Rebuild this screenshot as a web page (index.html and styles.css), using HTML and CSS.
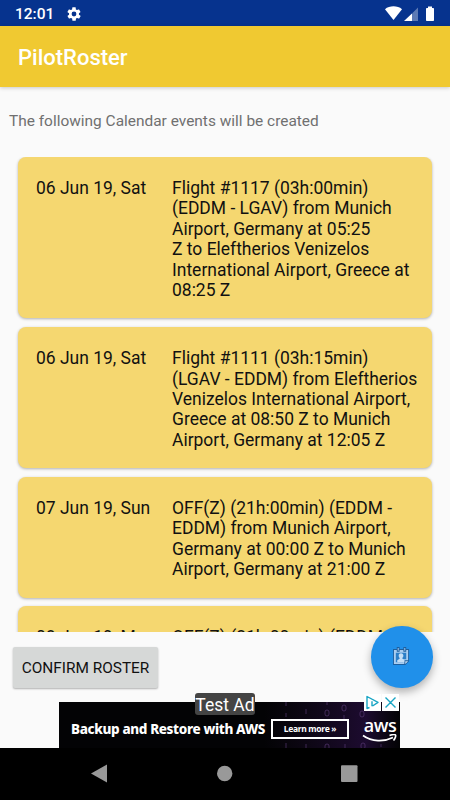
FILE: index.html
```
<!doctype html>
<html lang="en">
<head>
    <meta charset="utf-8">
    <meta name="viewport" content="width=device-width, initial-scale=1">
    <title>PilotRoster</title>
    <link rel="stylesheet" href="styles.css">
</head>
<body>
    <div class="status-bar">
        <span class="clock">12:01</span>
        <svg class="gear" viewBox="0 0 24 24"><path fill="#fff" fill-rule="evenodd" d="M19.4 13a7.5 7.5 0 0 0 0-2l2.1-1.6a.5.5 0 0 0 .1-.7l-2-3.4a.5.5 0 0 0-.6-.2l-2.5 1a7.3 7.3 0 0 0-1.7-1L14.5 2.4a.5.5 0 0 0-.5-.4h-4a.5.5 0 0 0-.5.4l-.4 2.7a7.7 7.7 0 0 0-1.7 1l-2.5-1a.5.5 0 0 0-.6.2l-2 3.4a.5.5 0 0 0 .1.7L4.6 11a7.9 7.9 0 0 0 0 2l-2.1 1.6a.5.5 0 0 0-.1.7l2 3.4c.1.2.4.3.6.2l2.5-1c.5.4 1.1.7 1.7 1l.4 2.7c0 .2.2.4.5.4h4c.2 0 .5-.2.5-.4l.4-2.7a7.3 7.3 0 0 0 1.7-1l2.5 1c.2.1.5 0 .6-.2l2-3.4a.5.5 0 0 0-.1-.7zM12 15.6a3.6 3.6 0 1 1 0-7.2 3.6 3.6 0 0 1 0 7.2z"/></svg>
        <svg class="system-icons" viewBox="0 0 50 16">
            <path fill="#fff" d="M0 3.2C4.5-.6 12.5-.6 17 3.2L8.5 14z"/>
            <path fill="#fff" d="M19 15 27 7.500V15z"/>
            <path fill="#fff" fill-opacity=".35" d="M27 7.5 33 1.5V15H27z"/>
            <path fill="#fff" d="M43 .5h4V2h1.200c.5 0 .8.3.8.8v11.400c0 .5-.3.8-.8.8h-6.400c-.5 0-.8-.3-.8-.8V2.800c0-.5.3-.8.8-.8H43z"/>
        </svg>
    </div>

    <header class="app-bar">PilotRoster</header>

    <p class="intro">The following Calendar events will be created</p>

    <ul class="events">
        <li>
            <div class="date">06 Jun 19, Sat</div>
            <div class="details">Flight #1117 (03h:00min)<br>(EDDM - LGAV) from Munich<br>Airport, Germany at 05:25<br>Z to Eleftherios Venizelos<br>International Airport, Greece at<br>08:25 Z</div>
        </li>
        <li>
            <div class="date">06 Jun 19, Sat</div>
            <div class="details">Flight #1111 (03h:15min)<br>(LGAV - EDDM) from Eleftherios<br>Venizelos International Airport,<br>Greece at 08:50 Z to Munich<br>Airport, Germany at 12:05 Z</div>
        </li>
        <li>
            <div class="date">07 Jun 19, Sun</div>
            <div class="details">OFF(Z) (21h:00min) (EDDM -<br>EDDM) from Munich Airport,<br>Germany at 00:00 Z to Munich<br>Airport, Germany at 21:00 Z</div>
        </li>
        <li>
            <div class="date">08 Jun 19, Mon</div>
            <div class="details">OFF(Z) (21h:00min) (EDDM -</div>
        </li>
    </ul>

    <div class="actions">
        <button type="button" class="confirm">CONFIRM ROSTER</button>
    </div>

    <button type="button" class="fab" aria-label="Open calendar">
        <svg viewBox="0 0 18 20">
            <path fill="#1d5f9f" d="M4 0h3v2h4V0h3v2h3v13l-4 4H0V2h4z"/>
            <path fill="#a9cdf0" d="M5 1h1v3H5zM12 1h1v3h-1zM1 3h3v2h3V3h4v2h3V3h2v11h-4v4H1z"/>
            <path fill="#2c7fc8" d="M3 6h11v7h-3v3H3z"/>
            <path fill="#c5def5" d="M8.5 6.5c1.7 0 2.5 1.1 2.5 2.6 0 1-.4 1.8-1 2.3v1l2 1V16H4.5v-2l2.5-1.5v-1c-.6-.5-1-1.3-1-2.4 0-1.5.8-2.6 2.5-2.6zM13 15h3l-3 3z"/>
        </svg>
    </button>

    <div class="ad">
        <svg class="ad-pattern" viewBox="0 0 341 46">
            <defs>
                <linearGradient id="glow">
                    <stop offset="0" stop-color="#180b24" stop-opacity="0"/>
                    <stop offset=".75" stop-color="#1d0b30"/>
                    <stop offset="1" stop-color="#180b24" stop-opacity="0"/>
                </linearGradient>
            </defs>
            <path fill="url(#glow)" d="M205 0h136v46H205z"/>
            <g fill="none" stroke="#5a3b76" stroke-opacity=".65">
                <path d="M227 0v4M227 11v4M247 7v5M247 42v4M227 41v5M307 0v5M286 42v4M322 42v3"/>
                <rect x="266" y="8" width="4" height="6" rx="2"/>
                <rect x="283" y="3" width="4" height="6" rx="2"/>
                <rect x="266" y="42" width="4" height="6" rx="2"/>
                <rect x="301" y="9" width="4" height="6" rx="2"/>
                <rect x="302" y="41" width="4" height="6" rx="2"/>
                <path d="M268 0v3M285 13v4"/>
            </g>
        </svg>
        <span class="ad-text">Backup and Restore with AWS</span>
        <span class="ad-more">Learn more »</span>
        <span class="aws">
            <span class="aws-name">aws</span>
            <svg viewBox="0 0 36 9"><path fill="none" stroke="#fff" stroke-width="1.7" d="M1 1.5c9 6.5 21 6.5 30 2M27.5 1.5c3-1 5.5-1 6-.5s-.2 3.5-2 5.5"/></svg>
        </span>
        <span class="test-label">Test Ad</span>
        <svg class="ad-choices" viewBox="0 0 35 17">
            <path fill="#fff" d="M0 0h17v17H0zM18 0h17v17H18z"/>
            <path fill="none" stroke="#19a5c4" stroke-width="1.4" stroke-linejoin="round" d="M5.5 13.5 3 14.5v-12L14 8.3 8.5 12M8 7.2v5M8 4.8v1.3M21.5 3.5l10 10M31.5 3.5l-10 10"/>
        </svg>
    </div>

    <nav class="nav-bar">
        <svg viewBox="0 0 450 52">
            <g fill="#999">
                <path d="M91 25.5 107 16.5v18z"/>
                <circle cx="224.7" cy="25.5" r="7.7"/>
                <rect x="341" y="17.2" width="16.5" height="16.8" rx="1"/>
            </g>
        </svg>
    </nav>
</body>
</html>
```

FILE: styles.css
```
/* Reset */
* { padding:0; margin:0; box-sizing:border-box; }

:root {
    --card: #f5d770;
    --bar: #f0c931;
    --blue: #2090ea;
}

body {
    display: flex;
    flex-direction: column;
    width: 450px;
    height: 800px;
    overflow: hidden;
    position: relative;
    background-color: #fafafa;
    color: #111;
    font-family: Roboto, sans-serif;
}
svg { display:block; }
button { border:0; font-family:inherit; }

/* Top bars */
.status-bar {
    flex: none;
    height: 26px;
    display: flex;
    align-items: center;
    padding: 1px 15px 0;
    background-color: #06338e;
    color: #fff;
}
.clock {
    font-size: 15.5px;
    font-weight: 500;
    line-height: 18px;
    padding-top: 1px;
}
.gear { width:16px; height:16px; margin-left:12px; }
.system-icons {
    width: 50px;
    height: 16px;
    margin-left: auto;
}
.app-bar {
    flex: none;
    height: 61px;
    padding-left: 18px;
    line-height: 64px;
    background-color: var(--bar);
    box-shadow: 0 1px 4px rgba(0,0,0,0.2);
    color: #fff;
    font-size: 22px;
    font-weight: 500;
}

/* Event list */
.intro {
    flex: none;
    padding: 24px 9px 0;
    height: 70px;
    font-size: 15.45px;
    line-height: 20px;
    color: #707070;
}
ul.events {
    flex: none;
    height: 475px;
    overflow: hidden;
    list-style-type: none;
    padding: 0 18px;
}
ul.events li {
    display: flex;
    padding: 21px 0 18px 18px;
    margin-bottom: 8.8px;
    border-radius: 8px;
    background-color: var(--card);
    box-shadow: 0 1px 3px rgba(0,0,0,0.3);
    font-size: 17.48px;
    line-height: 20.4px;
}
.date { width:136px; flex:none; }
.details { white-space:nowrap; }

.actions {
    flex: none;
    height: 70px;
    padding: 15px 13px;
}
.confirm {
    width: 145px;
    height: 41px;
    border-radius: 2px;
    background-color: #d6d8d7;
    box-shadow: 0 1px 2px rgba(0,0,0,0.3);
    color: #111;
    font-size: 15.4px;
    white-space: nowrap;
}
.fab {
    position: absolute;
    left: 371px;
    top: 626px;
    width: 61.5px;
    height: 61.5px;
    display: flex;
    align-items: center;
    justify-content: center;
    border-radius: 50%;
    background-color: var(--blue);
    box-shadow: 0 4px 8px rgba(0,0,0,0.3);
}
.fab svg { width:17px; height:19px; }

/* Ad banner */
.ad {
    flex: none;
    position: relative;
    display: flex;
    align-items: center;
    width: 341px;
    height: 46px;
    margin-left: 59px;
    padding: 8px 0 0 12px;
    background-color: #030305;
    color: #fff;
}
.ad-pattern {
    position: absolute;
    left: 0;
    top: 0;
    width: 341px;
    height: 46px;
}
.ad-text, .ad-more, .aws { position:relative; white-space:nowrap; }
.ad-text {
    width: 200px;
    font-family: "Noto Sans", sans-serif;
    font-size: 13.5px;
    font-weight: 800;
    letter-spacing: -0.37px;
}
.ad-more {
    width: 78px;
    height: 20px;
    border: 2px solid #fff;
    text-align: center;
    font: bold 8.5px/15px "Noto Sans", sans-serif;
    letter-spacing: -0.3px;
}
.aws {
    width: 36px;
    margin-left: 13px;
    align-self: flex-start;
    padding-top: 7px;
}
.aws-name {
    display: block;
    height: 18px;
    text-align: center;
    font: 600 18px/16px "Open Sans", sans-serif;
    letter-spacing: -0.4px;
}
.aws svg { width:36px; height:9px; margin-top:-1px; }
.test-label {
    position: absolute;
    left: 136px;
    top: -9px;
    width: 60px;
    height: 22px;
    border-radius: 3px;
    background-color: #444;
    text-align: center;
    font-size: 17.5px;
    line-height: 24px;
}
.ad-choices {
    position: absolute;
    right: 1px;
    top: -8px;
    width: 35px;
    height: 17px;
}

.nav-bar { flex:none; height:52px; background-color:#000; }
.nav-bar svg { width:450px; height:52px; }
```
